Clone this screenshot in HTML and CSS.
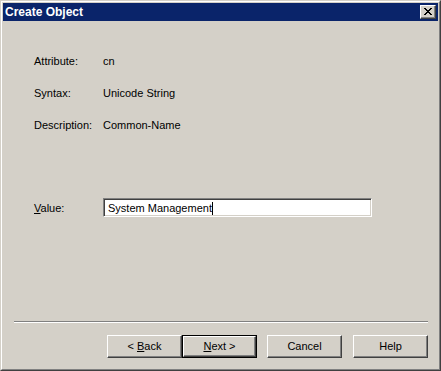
FILE: index.html
```html
<!DOCTYPE html>
<html>
<head>
<meta charset="utf-8">
<link rel="stylesheet" href="styles.css">
</head>
<body>
<div class="window">
  <div class="window-inner">
    <div class="titlebar">
      <span class="title">Create Object</span>
      <span class="close-btn">
        <svg width="8" height="7" viewBox="0 0 8 7">
          <path d="M0 0h2v1h-2zM6 0h2v1h-2zM1 1h2v1h-2zM5 1h2v1h-2zM2 2h4v1h-4zM3 3h2v1h-2zM2 4h4v1h-4zM1 5h2v1h-2zM5 5h2v1h-2zM0 6h2v1h-2zM6 6h2v1h-2z" fill="#000"/>
        </svg>
      </span>
    </div>
    <div class="content">
      <div class="info">
        <span class="label">Attribute:</span><span class="val">cn</span>
        <span class="label">Syntax:</span><span class="val">Unicode String</span>
        <span class="label">Description:</span><span class="val">Common-Name</span>
      </div>
      <div class="value-row">
        <span class="label"><u>V</u>alue:</span>
        <div class="input"><span>System Management</span><span class="caret"></span></div>
      </div>
      <div class="spacer"></div>
      <div class="separator"></div>
      <div class="buttons">
        <div class="btn-pair">
          <span class="btn"><span>&lt; <u>B</u>ack</span></span>
          <span class="btn default"><span class="btn-in"><span><u>N</u>ext &gt;</span></span></span>
        </div>
        <span class="btn cancel"><span>Cancel</span></span>
        <span class="btn help"><span>Help</span></span>
      </div>
    </div>
  </div>
</div>
</body>
</html>
```
FILE: styles.css
```css
html, body {
  margin: 0;
  padding: 0;
  background: #d4d0c8;
}
body {
  font-family: "Liberation Sans", Arial, sans-serif;
  font-size: 11px;
  color: #000;
}
.window {
  width: 441px;
  height: 371px;
  box-sizing: border-box;
  border: 1px solid;
  border-color: #d4d0c8 #404040 #404040 #d4d0c8;
}
.window-inner {
  height: 100%;
  box-sizing: border-box;
  border: 1px solid;
  border-color: #fff #808080 #808080 #fff;
  padding: 1px;
  display: flex;
  flex-direction: column;
}
.titlebar {
  height: 18px;
  background: #0a246a;
  display: flex;
  align-items: center;
  justify-content: space-between;
  padding: 0 2px 0 2px;
}
.title {
  color: #fff;
  font-weight: bold;
  font-size: 12px;
  line-height: 14px;
}
.close-btn {
  width: 16px;
  height: 14px;
  box-sizing: border-box;
  background: #d4d0c8;
  border: 1px solid;
  border-color: #fff #404040 #404040 #fff;
  box-shadow: inset -1px -1px 0 #808080;
  display: flex;
  align-items: center;
  justify-content: center;
  padding: 0 1px 1px 0;
}
.close-btn svg { display: block; }
.content {
  flex: 1;
  display: flex;
  flex-direction: column;
  padding: 34px 10px 10px 0;
}
.info {
  display: grid;
  grid-template-columns: 69px auto;
  row-gap: 19px;
  padding-left: 31px;
  line-height: 13px;
}
.value-row {
  display: flex;
  align-items: center;
  padding-left: 31px;
  margin-top: 66px;
  line-height: 13px;
}
.value-row .label {
  width: 69px;
  padding-top: 2px;
}
.input {
  width: 269px;
  height: 19px;
  box-sizing: border-box;
  background: #fff;
  border: 1px solid;
  border-color: #808080 #fff #fff #808080;
  box-shadow: inset 1px 1px 0 #404040, inset -1px -1px 0 #d4d0c8;
  display: flex;
  align-items: center;
  padding: 1px 0 0 4px;
  font-size: 11px;
}
.caret {
  width: 1px;
  height: 13px;
  background: #000;
}
.spacer { flex: 1; }
.separator {
  margin-left: 11px;
  height: 0;
  border-top: 1px solid #808080;
  border-bottom: 1px solid #fff;
}
.buttons {
  margin-top: 12px;
  display: flex;
  justify-content: flex-end;
  gap: 10px;
}
.btn-pair { display: flex; }
.btn {
  width: 75px;
  height: 23px;
  box-sizing: border-box;
  border: 1px solid;
  border-color: #fff #404040 #404040 #fff;
  box-shadow: inset -1px -1px 0 #808080;
  display: flex;
  align-items: center;
  justify-content: center;
  line-height: 13px;
  white-space: pre;
}
.btn.default {
  border: 1px solid #000;
  box-shadow: none;
  padding: 0;
}
.btn-in {
  width: 100%;
  height: 100%;
  box-sizing: border-box;
  border: 1px solid;
  border-color: #fff #404040 #404040 #fff;
  box-shadow: inset -1px -1px 0 #808080;
  display: flex;
  align-items: center;
  justify-content: center;
}
.btn.help { margin-left: 1px; }
```
